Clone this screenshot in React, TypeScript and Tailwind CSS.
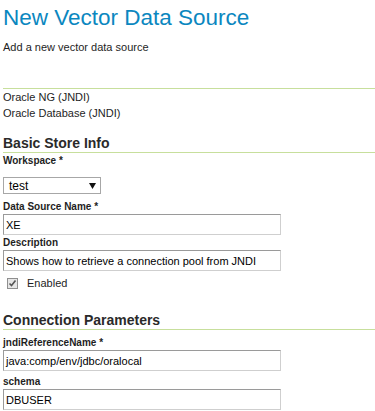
import React from "react";

const sans = { fontFamily: "'Liberation Sans', Arial, sans-serif" };

function Label({ children, className = "" }: { children: React.ReactNode; className?: string }) {
  return (
    <div className={"text-[10px] font-bold leading-[14px] text-[#1e1e1e] " + className}>{children}</div>
  );
}

function TextInput({ value, className = "" }: { value: string; className?: string }) {
  return (
    <div
      className={
        "w-[278px] h-[21px] flex items-center pl-[2px] border border-t-[#9a9a9a] border-l-[#9a9a9a] border-b-[#cfcfcf] border-r-[#cfcfcf] bg-white text-[11px] text-black whitespace-nowrap overflow-hidden " +
        className
      }
      style={sans}
    >
      {value}
    </div>
  );
}

function GreenLine({ className = "" }: { className?: string }) {
  return <div className={"h-px bg-[#c7df9c] " + className} />;
}

export default function App() {
  return (
    <div
      className="w-[375px] h-[411px] overflow-hidden bg-white pl-[3px] text-[11px] leading-[16px] text-[#1e1e1e]"
      style={sans}
    >
      <h1 className="pt-[2px] h-[33px] text-[22.5px] leading-[31px] font-normal text-[#0b87bf] whitespace-nowrap">
        New Vector Data Source
      </h1>
      <p className="mt-[6px] whitespace-nowrap">Add a new vector data source</p>
      <GreenLine className="mt-[33px]" />
      <div>Oracle NG (JNDI)</div>
      <div>Oracle Database (JNDI)</div>

      <h2 className="mt-[13px] text-[14px] leading-[18px] font-bold text-[#2a2a2a]">Basic Store Info</h2>
      <GreenLine />
      <Label className="mt-px">Workspace *</Label>
      <div className="mt-[9px] w-[98px] h-[17px] border border-[#a7a7a7] flex items-center justify-between pl-[5px] pr-[4px] text-[12px] text-black">
        <span>test</span>
        <svg width="7" height="6" viewBox="0 0 7 6">
          <path d="M0 0 H7 L3.5 6 Z" fill="#111" />
        </svg>
      </div>

      <Label className="mt-[6px]">Data Source Name *</Label>
      <TextInput value="XE" />
      <Label className="mt-px">Description</Label>
      <TextInput value="Shows how to retrieve a connection pool from JNDI" />

      <div className="mt-[4px] flex items-center h-[16px]">
        <div className="ml-[4px] w-[11px] h-[11px] border border-[#8f8f8f] bg-[#e6e6e6] flex items-center justify-center">
          <svg width="9" height="9" viewBox="0 0 9 9">
            <path d="M1.5 4.5 L3.5 6.5 L7.5 1.5" stroke="#555" strokeWidth="1.6" fill="none" />
          </svg>
        </div>
        <span className="ml-[9px]">Enabled</span>
      </div>

      <h2 className="mt-[20px] text-[14px] leading-[18px] font-bold text-[#2a2a2a]">Connection Parameters</h2>
      <GreenLine />
      <Label className="mt-[6px]">jndiReferenceName *</Label>
      <TextInput value="java:comp/env/jdbc/oralocal" />
      <Label className="mt-[4px]">schema</Label>
      <TextInput value="DBUSER" />
    </div>
  );
}
